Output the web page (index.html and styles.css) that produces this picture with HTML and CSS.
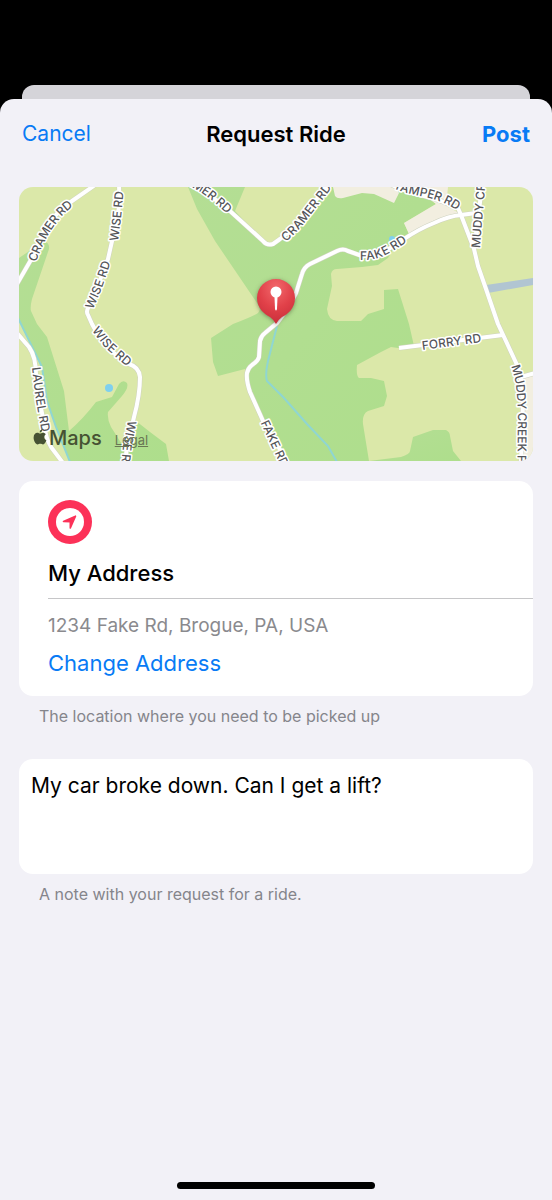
FILE: index.html
```html
<!DOCTYPE html>
<html lang="en">

<head>
  <meta charset="utf-8">
  <meta name="viewport" content="width=device-width, initial-scale=1">
  <title>Request Ride</title>
  <link rel="stylesheet" href="styles.css">
</head>

<body>
  <div class="back-sheet"></div>
  <form class="sheet">
    <header class="navbar">
      <button type="button" class="nav-button">Cancel</button>
      <h1>Request Ride</h1>
      <button type="submit" class="nav-button post">Post</button>
    </header>

    <main class="content">
      <div class="map">
        <svg class="map-canvas" viewBox="0 0 514 274" role="img" aria-label="Map of the pickup location">
          <defs>
            <linearGradient id="wood" x1="0" y1="0" x2="1" y2="1">
              <stop offset="0" stop-color="#b4de94"/>
              <stop offset="1" stop-color="#aede8c"/>
            </linearGradient>
            <radialGradient id="pin" cx=".5" cy=".2" r=".8">
              <stop offset="0" stop-color="#f2686b"/>
              <stop offset=".55" stop-color="#e14149"/>
              <stop offset="1" stop-color="#c92f3b"/>
            </radialGradient>
            <g id="roads">
              <path d="M-2 97L13 71Q20 51 30 37Q40 22 53 14L76 -2"/>
              <path d="M100 -2Q101 20 98 32L89 72L75 109L69 121Q67 125 69 128L73 137Q87 164 110 177Q120 180 121 190Q121 208 115 230L108 260L106 276"/>
              <path d="M169 -3Q190 6 211 24L244 54Q248 59 254 57L261 52Q275 41 284 29L310 -3"/>
              <path d="M269 276L244 234L231 205Q227 193 228 186Q229 181 233 178Q239 174 240 170L241 154Q242 149 246 146L258 136Q269 122 277 106L283 87Q285 80 291 77L318 64Q324 61 329 64L343 69Q361 70 385 52Q400 42 415 36Q430 29 442 28L457 26"/>
              <path d="M369 -4Q384 4 405 9Q422 13 439 21L442 28L455 62L459 79L467 102L479 137L499 180Q504 195 504 217L502 276"/>
              <path d="M463 -2L460 24L455 62"/>
              <path d="M380 161L484 148"/>
              <path d="M502 190L516 186"/>
              <path d="M-2 146L10 160Q17 170 17 188L19 204L25 237Q27 252 32 260L44 276"/>
            </g>
            <path id="cramer-w" d="M13 74C19 59 24 48 31 38S44 21 57 12"/>
            <path id="wise-n" d="M95 54L98 32L101 0"/>
            <path id="wise-m" d="M70 121L78 103L89 71"/>
            <path id="wise-s" d="M76 141L89 158L112 178"/>
            <path id="wise-e" d="M113 234L108 260L104 300"/>
            <path id="cramer-n" d="M135 -17L171 -5Q188 2 211 24"/>
            <path id="cramer-e" d="M264 52Q276 42 285 30L313 -6"/>
            <path id="tamper" d="M362 -9Q380 1 402 5T440 20"/>
            <path id="muddy-n" d="M457 61L460 24L467 -50"/>
            <path id="muddy-s" d="M496 178L501 196L503 225L502 330"/>
            <path id="fake-e" d="M341 69C362 70 372 60 390 49"/>
            <path id="fake-s" d="M245 234L276 300"/>
            <path id="forry" d="M403 159L470 150"/>
            <path id="laurel" d="M17 180L20 207L29 258"/>
          </defs>

          <rect class="field" width="514" height="274"/>

          <!-- woods -->
          <path class="wood" d="M0 71L25 54Q31 56 30 62L13 112Q11 120 12 124L18 137L28 150L45 204L50 244Q64 232 77 215L93 210L100 197Q104 192 108 196Q110 201 103 209L89 225Q88 232 92 240L106 262L117 234L131 245L147 257L150 274H51L37 240L28 214L23 180L0 133Z"/>
          <path class="wood" d="M169 0L178 22L196 54L238 116Q243 122 239 126Q235 129 214 137L192 151L194 175L199 189L226 182L229 197L244 234L268 274H350L344 237Q343 227 349 224L365 219L368 209L365 194L352 191H340Q337 189 338 178L362 165L372 160L379 161L395 159L390 137L379 102L365 103V122L349 127L342 134H318Q309 133 308 122L313 99L312 87Q313 82 318 82L343 80L359 78L369 71L375 61L390 47L385 36L417 17L395 0Z"/>
          <path class="wood" d="M350 274L382 270Q391 267 391 264L394 250L414 243H427Q431 245 431 249L434 264L442 274Z"/>
          <path class="field" d="M226 0L216 24L246 56L250 58L261 52L284 29L308 0Z"/>

          <!-- built-up areas -->
          <path class="town" d="M314 0L316 9Q318 12 324 11L343 6L355 7L375 16L380 6L377 0Z"/>
          <path class="town" d="M385 36L417 17L395 0H429L427 19L442 27L415 36L390 47Z"/>
          <path class="town" d="M499 190L514 186V274H504Z"/>

          <!-- water -->
          <path class="river" d="M467 98L514 91V98L469 106Z"/>
          <path class="stream" d="M-1 131L23 180L28 214L37 240L51 275"/>
          <path class="stream" d="M258 139L249 174Q246 188 248 194L265 211L288 237L309 259L318 275"/>
          <circle class="pond" cx="90" cy="201" r="4"/>
          <circle class="pond" cx="373" cy="52" r="3"/>

          <use href="#roads" class="road-edge"/>
          <use href="#roads" class="road"/>

          <g class="road-names">
            <text dy="4"><textPath href="#cramer-w">CRAMER RD</textPath></text>
            <text dy="4"><textPath href="#wise-n">WISE RD</textPath></text>
            <text dy="4"><textPath href="#wise-m">WISE RD</textPath></text>
            <text dy="4"><textPath href="#wise-s">WISE RD</textPath></text>
            <text dy="4"><textPath href="#wise-e">WISE RD</textPath></text>
            <text dy="4" text-anchor="end"><textPath href="#cramer-n" startOffset="100%">CRAMER RD</textPath></text>
            <text dy="4"><textPath href="#cramer-e">CRAMER RD</textPath></text>
            <text dy="4" text-anchor="end"><textPath href="#tamper" startOffset="100%">TAMPER RD</textPath></text>
            <text dy="4"><textPath href="#muddy-n">MUDDY CREEK</textPath></text>
            <text dy="4"><textPath href="#muddy-s">MUDDY CREEK FORKS</textPath></text>
            <text dy="4"><textPath href="#fake-e">FAKE RD</textPath></text>
            <text dy="4"><textPath href="#fake-s">FAKE RD</textPath></text>
            <text dy="4"><textPath href="#forry">FORRY RD</textPath></text>
            <text dy="4"><textPath href="#laurel">LAUREL RD</textPath></text>
          </g>

          <path class="pin" d="M257 92A19 19 0 0 1 276 111C276 121 269 127 263 130Q260 132 257 137Q254 132 251 130C245 127 238 121 238 111A19 19 0 0 1 257 92Z"/>
          <circle cx="257" cy="105" r="5.5" fill="#fff"/>
          <path d="M255.5 110H258.5L258 122Q257 125 256 122Z" fill="#fff"/>
        </svg>
        <div class="attribution">
          <svg class="apple" viewBox="0 0 14 17" aria-hidden="true">
            <path d="M9.6 0C9.7 2 8.4 3.7 6.7 3.8C6.5 2 8 .3 9.6 0ZM7.1 4.9C7.8 4.9 8.7 4 10.3 4C11.5 4 12.6 4.6 13.3 5.6C10.7 7.1 11 10.9 13.8 12C13 14 11.8 16.4 10.2 16.4C9.1 16.4 8.7 15.7 7.3 15.7S5.5 16.4 4.5 16.4C2.5 16.4 .2 12.6 .2 9.3C.2 6 2.2 4.2 4.2 4.1C5.5 4.1 6.4 4.9 7.1 4.9Z"/>
          </svg>
          <span class="brand">Maps</span>
          <a class="legal" href="#legal">Legal</a>
        </div>
      </div>

      <section class="card address">
        <svg class="location-icon" viewBox="0 0 44 44" aria-hidden="true">
          <circle cx="22" cy="22" r="22" fill="#fc3158"/>
          <circle cx="22" cy="22" r="14" fill="#fff"/>
          <path d="M15.5 21.5L27.5 16.2L22.3 28V21.6Z" fill="#fc3158" stroke="#fc3158" stroke-width="1.6" stroke-linejoin="round"/>
        </svg>
        <h2>My Address</h2>
        <p class="street">1234 Fake Rd, Brogue, PA, USA</p>
        <button type="button" class="change">Change Address</button>
      </section>
      <p class="hint">The location where you need to be picked up</p>

      <textarea class="card note" aria-label="Note" aria-describedby="note-hint">My car broke down. Can I get a lift?</textarea>
      <p class="hint" id="note-hint">A note with your request for a ride.</p>
    </main>

    <div class="home-indicator"></div>
  </form>
</body>

</html>
```
FILE: styles.css
```css
* {
  box-sizing: border-box;
}

body {
  display: flex;
  flex-direction: column;
  min-height: 100vh;
  margin: 0;
  padding-top: 85px;
  background: #000;
  color: #000;
  font-family: Inter, "Liberation Sans", sans-serif;
  font-size: 21px;
  line-height: 28px;
}

h1,
h2,
p {
  margin: 0;
}

button {
  padding: 0;
  border: none;
  background: none;
  color: #087bf5;
  font: inherit;
  cursor: pointer;
}

.back-sheet {
  height: 14px;
  margin: 0 22px;
  border-radius: 12px 12px 0 0;
  background: #d5d4d9;
}

.sheet {
  display: flex;
  flex: 1;
  flex-direction: column;
  border-radius: 14px 14px 0 0;
  background: #f2f1f7;
}

.navbar {
  display: grid;
  grid-template-columns: 1fr auto 1fr;
  align-items: center;
  height: 70px;
  padding: 0 22px;
}

.navbar h1 {
  font-size: 22px;
  font-weight: 600;
}

.nav-button {
  justify-self: start;
}

.post {
  justify-self: end;
  font-size: 22px;
  font-weight: 700;
}

.content {
  flex: 1;
  padding: 18px 19px;
}

.map {
  position: relative;
  overflow: hidden;
  margin-bottom: 20px;
  border-radius: 14px;
}

.map-canvas {
  display: block;
  width: 100%;
}

.field {
  fill: #dbe8a9;
}

.wood {
  fill: url(#wood);
}

.town {
  fill: #f2eee0;
}

.river {
  fill: #b1c5d2;
}

.stream {
  fill: none;
  stroke: #8fd6d2;
  stroke-width: 2;
}

.pond {
  fill: #7fd0ee;
}

.road-edge,
.road {
  fill: none;
  stroke-linejoin: round;
}

.road-edge {
  stroke: #cfd3c0;
  stroke-width: 5;
}

.road {
  stroke: #fff;
  stroke-width: 4;
}

.road-names {
  fill: #55565a;
  stroke: #fff;
  stroke-width: 3;
  stroke-linejoin: round;
  paint-order: stroke;
  font-size: 12px;
  font-weight: 500;
}

.pin {
  fill: url(#pin);
  filter: drop-shadow(0 1px 2px rgba(60, 60, 40, .5));
}

.attribution {
  position: absolute;
  bottom: 7px;
  left: 14px;
  display: flex;
  align-items: baseline;
  color: #465233;
}

.apple {
  width: 14px;
  height: 16px;
  margin-right: 2px;
  fill: currentColor;
}

.brand {
  font-size: 20px;
  font-weight: 500;
}

.legal {
  margin-left: 13px;
  color: #6a7754;
  font-size: 13px;
}

.card {
  border-radius: 14px;
  background: #fff;
}

.address {
  padding: 19px 0 19px 29px;
}

.location-icon {
  display: block;
  width: 44px;
  height: 44px;
  margin-bottom: 15px;
}

.address h2 {
  padding-bottom: 11px;
  border-bottom: 1px solid #c6c6c8;
  font-size: 22px;
  font-weight: 500;
}

.street {
  margin: 13px 0 9px;
  color: #8a8a8e;
  font-size: 19px;
}

.change {
  display: block;
  font-size: 22px;
}

.hint {
  padding: 8px 20px 0;
  color: #85858b;
  font-size: 16px;
  line-height: 24px;
}

.note {
  display: block;
  width: 100%;
  height: 115px;
  margin-top: 31px;
  padding: 13px 12px;
  border: none;
  outline: none;
  resize: none;
  color: inherit;
  font: inherit;
}

.home-indicator {
  width: 36%;
  height: 7px;
  margin: 0 auto 11px;
  border-radius: 4px;
  background: #000;
}
```
